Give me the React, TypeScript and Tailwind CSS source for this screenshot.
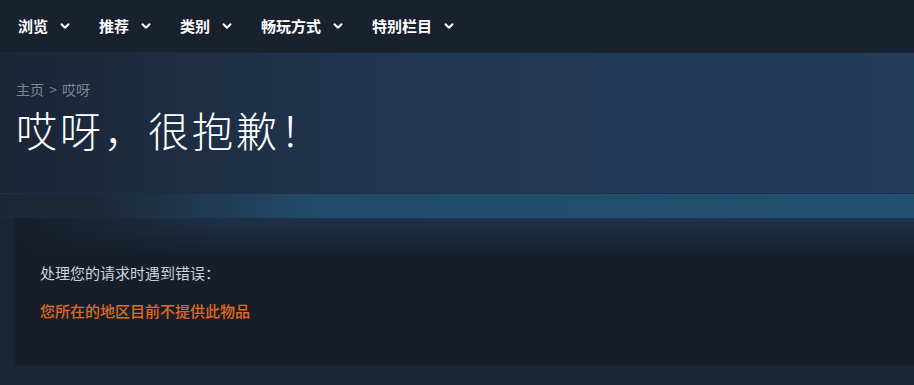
import { ChevronDown } from "lucide-react";

const navItems = ["浏览", "推荐", "类别", "畅玩方式", "特别栏目"];

const cjk = { fontFamily: '"Noto Sans CJK SC", "Noto Sans", sans-serif' };

function NavBar() {
  return (
    <div className="h-[53px] bg-[#19212e] flex items-center pl-[18px] gap-[27px] border-b border-[#1c2838]">
      {navItems.map((item) => (
        <div key={item} className="flex items-center gap-[10px] text-white text-[15px] font-semibold">
          <span>{item}</span>
          <ChevronDown size={14} strokeWidth={3.5} className="text-white" />
        </div>
      ))}
    </div>
  );
}

export default function App() {
  return (
    <div className="w-[914px] h-[385px] overflow-hidden bg-[#1b2434]" style={cjk}>
      <NavBar />

      {/* Kopfbereich */}
      <div className="h-[140px] bg-gradient-to-r from-[#1b2536] via-[#203650] via-40% to-[#223d59] pl-4 pt-[26px]">
        <div className="text-[14px] text-[#7d8793] leading-5">
          主页 <span className="mx-[2px]">&gt;</span> 哎呀
        </div>
        <h1 className="text-[41px] font-light text-white leading-[48px] mt-[6px] tracking-[3px]">哎呀，很抱歉！</h1>
      </div>

      {/* Blaues Band */}
      <div className="h-[25px] border-t border-[#1c3149] bg-gradient-to-r from-[#1c2838] from-10% via-[#214c6c] via-35% to-[#22506f]" />

      {/* Fehlerbox */}
      <div className="ml-[15px] h-[147px] bg-[#171e29] relative overflow-hidden">
        <div className="absolute inset-x-0 top-0 h-[40px] bg-gradient-to-b from-[#1f3a55]/70 to-transparent" />
        <div className="absolute inset-y-0 left-0 w-[200px] bg-gradient-to-r from-[#171e29] to-transparent" />
        <div className="relative px-[25px] pt-[44px]">
          <div className="text-[15px] text-[#c6d4df] leading-[22px]">处理您的请求时遇到错误：</div>
          <div className="text-[15px] text-[#e3691f] font-medium leading-[22px] mt-[16px]">您所在的地区目前不提供此物品</div>
        </div>
      </div>
    </div>
  );
}
